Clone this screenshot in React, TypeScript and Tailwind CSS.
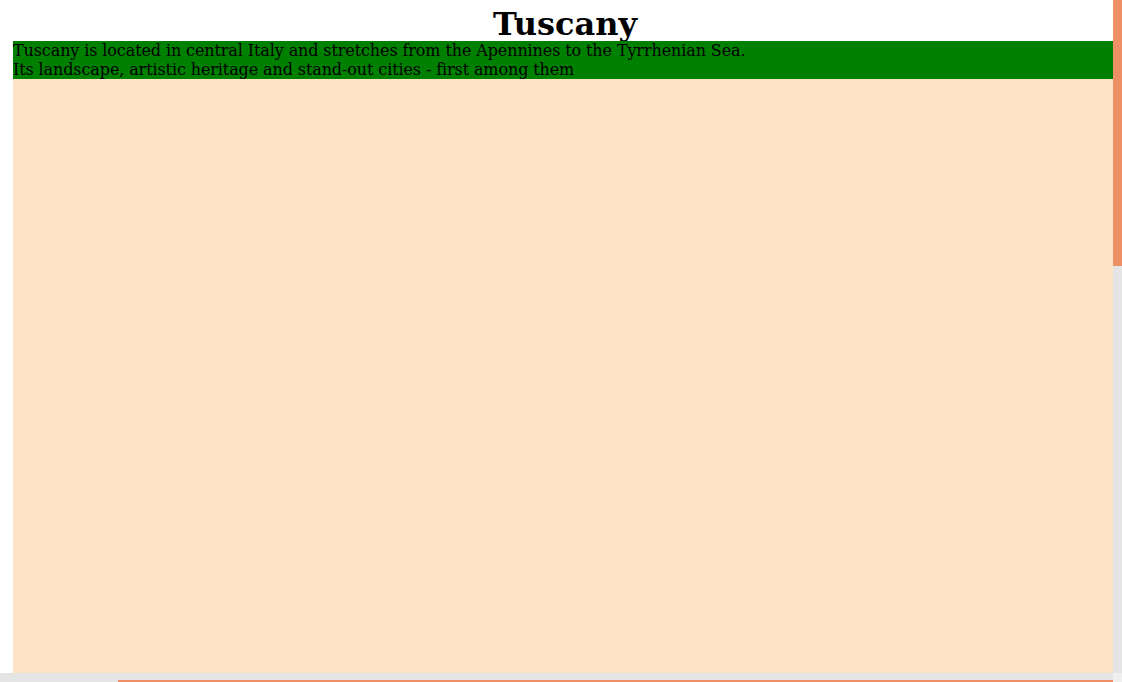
import React from 'react';

export default function App() {
  return (
    <div className="flex h-[682px] w-[1122px] flex-col overflow-hidden bg-white font-['DejaVu_Serif',serif] text-black">
      <div className="flex h-[673px]">
        {/* page viewport */}
        <div className="flex w-[1113px] flex-col overflow-hidden pl-[13px]">
          <h1 className="h-[41px] shrink-0 pl-[4px] pt-[8px] text-center text-[32px] font-bold leading-[32px]">
            Tuscany
          </h1>
          <div className="shrink-0 bg-[#008000] text-[16px] leading-[19px] tracking-[-0.11px]">
            <p>Tuscany is located in central Italy and stretches from the Apennines to the Tyrrhenian Sea.</p>
            <p>Its landscape, artistic heritage and stand-out cities - first among them</p>
          </div>
          <div className="flex-1 bg-[#fee3c4]" />
        </div>
        {/* vertical scrollbar */}
        <div className="w-[9px] bg-[#e5e5e5]">
          <div className="h-[266px] bg-[#ee9066]" />
        </div>
      </div>
      {/* horizontal scrollbar */}
      <div className="flex h-[9px]">
        <div className="flex w-[1113px] flex-col justify-end bg-[#e5e5e5] pl-[118px]">
          <div className="h-[2px] bg-[#ee9066]" />
        </div>
        <div className="w-[9px] bg-[#f0f0f0]" />
      </div>
    </div>
  );
}
